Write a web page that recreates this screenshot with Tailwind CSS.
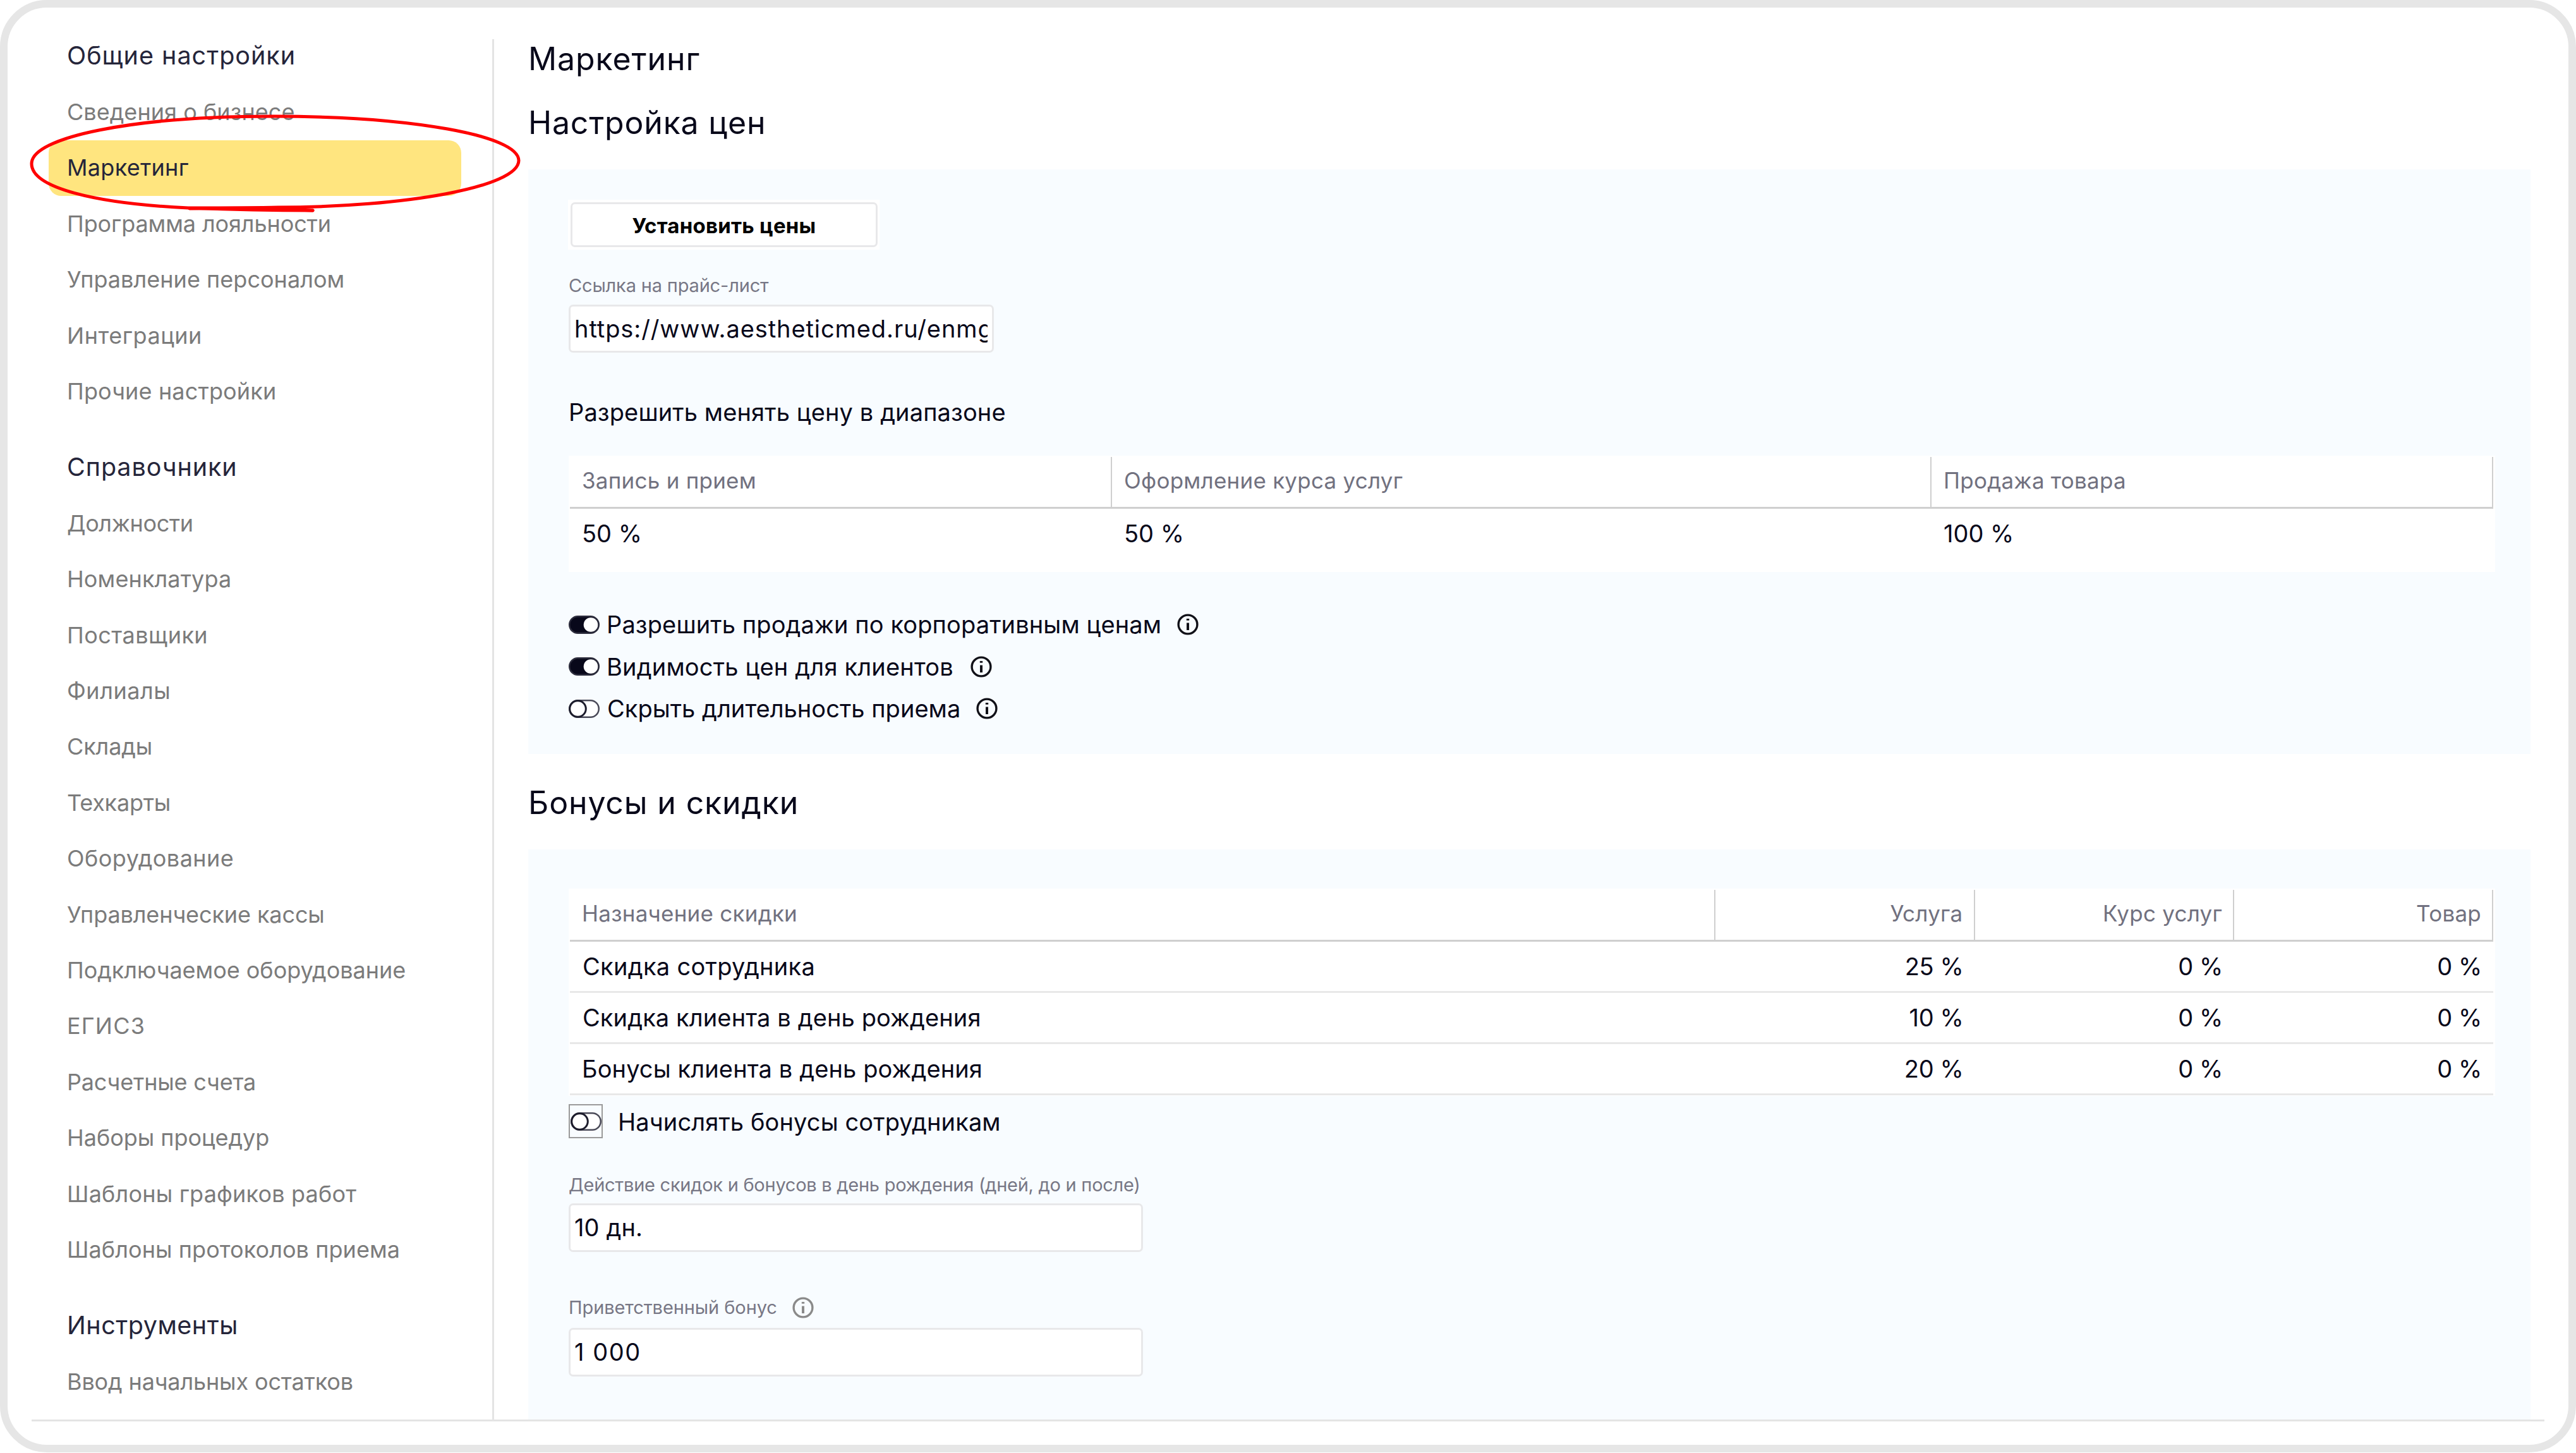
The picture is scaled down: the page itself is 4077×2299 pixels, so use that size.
<!DOCTYPE html>
<html lang="ru">
<head>
  <meta charset="UTF-8">
  <meta name="viewport" content="width=device-width, initial-scale=1.0">
  <title>Маркетинг</title>
  <!-- Tailwind CSS CDN -->
  <script src="https://cdn.jsdelivr.net/npm/@tailwindcss/browser@4"></script>
</head>
<body class="bg-white font-['Inter',sans-serif] text-[#08081a]">

  <!-- Shared icons -->
  <svg class="hidden">
    <symbol id="toggle-on" viewBox="0 0 49 29">
      <rect x="1.25" y="1.25" width="46.5" height="26.5" rx="13.25" fill="#08081a" stroke="#2c2c3c" stroke-width="2.5"/>
      <circle cx="35" cy="14.5" r="11.3" fill="#fff"/>
    </symbol>
    <symbol id="toggle-off" viewBox="0 0 49 29">
      <rect x="1.25" y="1.25" width="46.5" height="26.5" rx="13.25" fill="#fff" stroke="#4a4a58" stroke-width="2.5"/>
      <circle cx="14.5" cy="14.5" r="12.8" fill="#fff" stroke="#1c1c2c" stroke-width="3"/>
    </symbol>
    <symbol id="info" viewBox="0 0 34 34">
      <circle cx="17" cy="17" r="14.9" fill="none" stroke="currentColor" stroke-width="3.4"/>
      <path d="M17 14.5v11.5" stroke="currentColor" stroke-width="4"/>
      <path d="M14.8 9.3h4.4" stroke="currentColor" stroke-width="2.8"/>
    </symbol>
  </svg>

  <div class="relative flex w-[4077px] h-[2298px] border-[12px] border-[#e6e6e6] rounded-[74px] overflow-hidden">

    <!-- Sidebar -->
    <nav class="w-[767px] shrink-0 pt-[33px] pl-[65px] text-[36px] tracking-[0.001em] text-[#7b7b7b] *:flex *:items-center *:h-[88.4px] *:w-[653px] *:pl-[29px] *:pb-px">
      <h3 class="text-[39.5px] tracking-[0.025em] text-[#25253a]">Общие настройки</h3>
      <a>Сведения о бизнесе</a>
      <a class="bg-[#ffe57f] rounded-[20px] text-[#25253a] tracking-[0.008em]">Маркетинг</a>
      <a class="tracking-[-0.003em]">Программа лояльности</a>
      <a>Управление персоналом</a>
      <a class="tracking-[0.015em]">Интеграции</a>
      <a class="tracking-[0.004em]">Прочие настройки</a>

      <h3 class="mt-8 text-[39.5px] tracking-[0.023em] text-[#25253a]">Справочники</h3>
      <a class="tracking-[-0.01em]">Должности</a>
      <a class="tracking-[0.003em]">Номенклатура</a>
      <a class="tracking-[0.013em]">Поставщики</a>
      <a class="tracking-[0.015em]">Филиалы</a>
      <a class="tracking-[-0.003em]">Склады</a>
      <a class="tracking-[-0.006em]">Техкарты</a>
      <a class="tracking-[0.013em]">Оборудование</a>
      <a class="tracking-[-0.003em]">Управленческие кассы</a>
      <a class="tracking-[-0.001em]">Подключаемое оборудование</a>
      <a class="tracking-[0.033em]">ЕГИСЗ</a>
      <a class="tracking-[-0.005em]">Расчетные счета</a>
      <a class="tracking-[-0.001em]">Наборы процедур</a>
      <a class="tracking-[0.005em]">Шаблоны графиков работ</a>
      <a class="tracking-[0.002em]">Шаблоны протоколов приема</a>

      <h3 class="mt-8 text-[39.5px] tracking-[0.013em] text-[#25253a]">Инструменты</h3>
      <a class="tracking-[-0.004em]">Ввод начальных остатков</a>
    </nav>

    <div class="w-[3px] h-[2184px] mt-[50px] shrink-0 bg-[#e4e4e4]"></div>

    <!-- Content -->
    <main class="w-[3169px] ml-[54px] pt-[31px] shrink-0 text-[38px] tracking-[0.003em]">
      <h1 class="h-[100px] leading-[100px] text-[50px] tracking-[0.018em]">Маркетинг</h1>
      <h2 class="h-[100px] leading-[100px] text-[50px] tracking-[0.016em] pt-px">Настройка цен</h2>

      <section class="mt-[25px] h-[925px] pl-16 pt-12 bg-[#f8fcff]">
        <div class="w-[493px] h-[79px] p-[4px] pr-[3px] -ml-px bg-white">
          <button class="flex items-center justify-center w-full h-full pt-[4px] border-[3px] border-[#e8e8ea] rounded-[7px] bg-white text-[33px] font-bold tracking-[0.007em] text-black">Установить цены</button>
        </div>

        <div class="mt-[37px] h-10 leading-10 text-[29px] tracking-[-0.006em] text-[#777785]">Ссылка на прайс-лист</div>
        <div class="mt-[10px] w-[673px] h-[76px] flex items-center pl-[6px] pr-[7px] border-[3px] border-[#e8e8ea] rounded-[7px] bg-white">
          <span class="w-full overflow-hidden whitespace-nowrap tracking-[0.024em]">https://www.aestheticmed.ru/enmg</span>
        </div>

        <div class="mt-[69px] h-[50px] leading-[50px]">Разрешить менять цену в диапазоне</div>

        <div class="mt-[44px] w-[3049px] h-[184px] pl-[2px] pt-[2px] bg-white">
          <div class="grid grid-cols-[858px_1297px_889px] w-[3044px] h-[81.5px] border-b-[3px] border-[#cfcfcf] text-[35px] tracking-[0.007em] text-[#71717f] *:flex *:items-center *:border-r-2 *:border-[#cfcfcf] *:pl-[19px] *:pb-[5px]">
            <div>Запись и прием</div>
            <div>Оформление курса услуг</div>
            <div>Продажа товара</div>
          </div>
          <div class="grid grid-cols-[858px_1297px_889px] w-[3044px] h-[80px] items-center tracking-normal *:pl-[19px]">
            <div>50 %</div>
            <div>50 %</div>
            <div>100 %</div>
          </div>
        </div>

        <div class="mt-[50px] *:flex *:items-center *:h-[66.5px]">
          <div>
            <svg class="w-[49px] h-[29px] mr-[11px]"><use href="#toggle-on"/></svg>
            <span class="pt-px">Разрешить продажи по корпоративным ценам</span>
            <svg class="w-[34px] h-[34px] ml-[25px] text-[#111118]"><use href="#info"/></svg>
          </div>
          <div>
            <svg class="w-[49px] h-[29px] mr-[11px]"><use href="#toggle-on"/></svg>
            <span class="pt-px tracking-[0.005em]">Видимость цен для клиентов</span>
            <svg class="w-[34px] h-[34px] ml-[27px] text-[#111118]"><use href="#info"/></svg>
          </div>
          <div>
            <svg class="w-[49px] h-[29px] mr-[12px]"><use href="#toggle-off"/></svg>
            <span class="pt-px tracking-[0.001em]">Скрыть длительность приема</span>
            <svg class="w-[34px] h-[34px] ml-[25px] text-[#111118]"><use href="#info"/></svg>
          </div>
        </div>
      </section>

      <h2 class="mt-[26px] h-[100px] leading-[100px] text-[50px] tracking-[0.017em] pt-px">Бонусы и скидки</h2>

      <section class="mt-[25px] h-[902px] pl-16 pt-[62px] bg-[#f8fcff]">
        <div class="w-[3049px] h-[328px] pl-[2px] pt-[2px] bg-white *:grid *:grid-cols-[1813px_410.5px_410.5px_410px] *:w-[3044px]">
          <div class="h-[82px] border-b-[3px] border-[#cfcfcf] text-[35px] tracking-[0.007em] text-[#71717f] *:flex *:items-center *:justify-end *:border-r-2 *:border-[#cfcfcf] *:pr-[17px] *:pb-[5px]">
            <div><span class="mr-auto pl-[19px]">Назначение скидки</span></div>
            <div>Услуга</div>
            <div>Курс услуг</div>
            <div>Товар</div>
          </div>
          <div class="h-[81px] items-center border-b-[3px] border-[#e8e8e8] *:text-right *:pr-[18px] *:tracking-[-0.01em]">
            <div><span class="block text-left pl-[20px] tracking-[0.008em]">Скидка сотрудника</span></div>
            <div>25 %</div>
            <div>0 %</div>
            <div>0 %</div>
          </div>
          <div class="h-[81px] items-center border-b-[3px] border-[#e8e8e8] *:text-right *:pr-[18px] *:tracking-[-0.01em]">
            <div><span class="block text-left pl-[20px] tracking-[0.003em]">Скидка клиента в день рождения</span></div>
            <div>10 %</div>
            <div>0 %</div>
            <div>0 %</div>
          </div>
          <div class="h-[81px] items-center border-b-[3px] border-[#e8e8e8] *:text-right *:pr-[18px] *:tracking-[-0.01em]">
            <div><span class="block text-left pl-[19px] tracking-[0.003em]">Бонусы клиента в день рождения</span></div>
            <div>20 %</div>
            <div>0 %</div>
            <div>0 %</div>
          </div>
        </div>

        <div class="mt-[13px] flex items-center h-[54px]">
          <div class="flex items-center justify-center w-[54px] h-[54px] mr-[24px] border-2 border-[#9a9a9a]">
            <svg class="w-[49px] h-[29px]"><use href="#toggle-off"/></svg>
          </div>
          <span class="pt-[2px]">Начислять бонусы сотрудникам</span>
        </div>

        <div class="mt-[54px] h-10 leading-10 text-[29px] tracking-[-0.009em] text-[#777785]">Действие скидок и бонусов в день рождения (дней, до и после)</div>
        <div class="mt-[9px] w-[909px] h-[77px] flex items-center pl-[6px] border-[3px] border-[#e8e8ea] rounded-[7px] bg-white">10 дн.</div>

        <div class="mt-[68px] h-10 flex items-center text-[29px] tracking-[-0.003em] text-[#777785]">
          Приветственный бонус
          <svg class="w-[34px] h-[34px] ml-[24px] text-[#8a8a8a]"><use href="#info"/></svg>
        </div>
        <div class="mt-[12px] w-[909px] h-[77px] flex items-center pl-[6px] border-[3px] border-[#e8e8ea] rounded-[7px] bg-white tracking-[0.04em]">1 000</div>
      </section>
    </main>

    <!-- Bottom rule -->
    <div class="absolute left-[38px] top-[2234px] w-[3977px] h-[3px] bg-[#e4e4e4]"></div>

    <!-- Hand-drawn marker around the active item -->
    <svg class="absolute left-[28px] top-[162px] w-[800px] h-[172px]" viewBox="40 174 800 172" fill="none" stroke="#ff0000" stroke-width="5" stroke-linecap="round">
      <path d="M300 330C400 329 450 331 495 333"/>
      <path d="M495 333C400 333 350 331 298 329C150 322 50 297 50 259C50 217 210 184 432 184C650 184 821 214 821 254C821 296 640 328 440 328C400 329 340 329 300 329"/>
    </svg>
  </div>

</body>
</html>
